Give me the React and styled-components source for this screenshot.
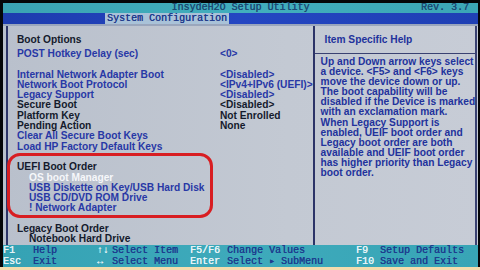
import React from 'react'
import styled, { createGlobalStyle } from 'styled-components'

const GlobalStyle = createGlobalStyle`
  html, body {
    margin: 0;
    padding: 0;
    background: #000;
  }
`

const Screen = styled.div`
  width: 480px;
  height: 270px;
  box-sizing: border-box;
  padding: 3px 2px 0 3px;
  background: #050608;
  display: flex;
  flex-direction: column;
  overflow: hidden;
`
const TitleBar = styled.div`
  height: 10px;
  background: linear-gradient(90deg, #3aa3b3, #42aebd 50%, #3ba7b6);
  font-family: "Liberation Mono", monospace;
  font-size: 10px;
  line-height: 10px;
  color: #1c4a74;
  position: relative;
  display: flex;
  justify-content: center;
  text-shadow: 0.3px 0 0 #1c4a74;
`
const Rev = styled.span`
  position: absolute;
  right: 9px;
  top: 0;
`
const MenuBar = styled.div`
  height: 11px;
  background: linear-gradient(90deg, #1d3cae, #2446c2 50%, #1f40b4);
  padding-left: 102px;
  display: flex;
  border-bottom: 2px solid #9aa6bc;
`
const Tab = styled.div`
  background: #a9c2d8;
  color: #1e3a8c;
  font-family: "Liberation Mono", monospace;
  font-size: 10px;
  line-height: 11px;
  padding: 0 2px;
  text-shadow: 0.3px 0 0 #1e3a8c;
`
const Body = styled.div`
  flex: 1;
  display: flex;
  background: linear-gradient(90deg, #b9c0cc, #c3c9d3 60%, #c7ccd6);
  padding-left: 3px;
  padding-right: 2px;
  min-height: 0;
`
const LeftPanel = styled.div`
  position: relative;
  width: 314px;
  border-left: 2px solid #2c3468;
  padding: 9px 0 0 9px;
  font-family: "Liberation Sans", Arial, sans-serif;
  font-weight: bold;
  font-size: 10.2px;
`
const Row = styled.div`
  display: flex;
  height: 10.3px;
  line-height: 10.3px;
  white-space: nowrap;
  color: ${p => p.$tone === 'dark' ? '#141a2c' : p.$tone === 'white' ? '#f6f7fa' : '#2838a6'};
  padding-left: ${p => p.$indent ? '12px' : '0'};
  margin-bottom: ${p => p.$gap ? '3.7px' : '0'};
`
const Label = styled.span`
  width: 203px;
`
const Value = styled.span``
const Spacer = styled.div`
  height: 10.3px;
`
const Highlight = styled.div`
  position: absolute;
  left: -1px;
  top: 127px;
  width: 206px;
  height: 65px;
  border: 3px solid #d81e22;
  border-radius: 13px;
  box-sizing: border-box;
`
const HelpPanel = styled.div`
  flex: 1;
  border-left: 2px solid #2c3468;
  border-right: 2px solid #3a4272;
  font-family: "Liberation Sans", Arial, sans-serif;
  font-weight: bold;
  font-size: 10.2px;
  color: #22329c;
`
const HelpTitle = styled.div`
  height: 27px;
  line-height: 27px;
  padding-left: 10px;
  border-bottom: 1.5px solid #3a4272;
`
const HelpText = styled.div`
  padding: 3px 0 0 6px;
  line-height: 10.1px;
  white-space: nowrap;
`
const Footer = styled.div`
  height: 22px;
  background: linear-gradient(90deg, #35a2b4, #3eaabb 50%, #38a5b6);
  display: grid;
  grid-template-columns: 30px 64px 15px 78px 37px 129px 24px 1fr;
  grid-auto-rows: 11px;
  font-family: "Liberation Mono", monospace;
  font-size: 10px;
  line-height: 11px;
  white-space: pre;
`
const Key = styled.span`
  color: #e6f4f7;
  text-shadow: 0.3px 0 0 #e6f4f7;
`
const Desc = styled.span`
  color: #1d3c8e;
  text-shadow: 0.3px 0 0 #1d3c8e;
`
const BottomEdge = styled.div`
  height: 3px;
  margin: 0 -2px 0 -3px;
  background: #f3dcae;
`

const options = [
  { label: 'Internal Network Adapter Boot', value: '<Disabled>' },
  { label: 'Network Boot Protocol', value: '<IPv4+IPv6 (UEFI)>' },
  { label: 'Legacy Support', value: '<Disabled>' },
  { label: 'Secure Boot', value: '<Disabled>', tone: 'dark' },
  { label: 'Platform Key', value: 'Not Enrolled', tone: 'dark' },
  { label: 'Pending Action', value: 'None', tone: 'dark' },
  { label: 'Clear All Secure Boot Keys' },
  { label: 'Load HP Factory Default Keys' },
]

const uefi = [
  { label: 'OS boot Manager', tone: 'white' },
  { label: 'USB Diskette on Key/USB Hard Disk' },
  { label: 'USB CD/DVD ROM Drive' },
  { label: '! Network Adapter' },
]

const help = [
  'Up and Down arrow keys select',
  'a device. <F5> and <F6> keys',
  'move the device down or up.',
  'The boot capability will be',
  'disabled if the Device is marked',
  'with an exclamation mark.',
  'When Legacy Support is',
  'enabled, UEIF boot order and',
  'Legacy boot order are both',
  'available and UEIF boot order',
  'has higher priority than Legacy',
  'boot order.',
]

const keys = [
  ['F1', 'Help', '\u2191\u2193', 'Select Item', 'F5/F6', 'Change Values', 'F9', 'Setup Defaults'],
  ['Esc', 'Exit', '\u2194', 'Select Menu', 'Enter', 'Select \u25B8 SubMenu', 'F10', 'Save and Exit'],
]

const App = () => {
  return (
    <Screen>
      <GlobalStyle />
      <TitleBar>
        InsydeH2O Setup Utility
        <Rev>Rev. 3.7</Rev>
      </TitleBar>
      <MenuBar>
        <Tab>System Configuration</Tab>
      </MenuBar>
      <Body>
        <LeftPanel>
          <Row $tone="dark" $gap>Boot Options</Row>
          <Row>
            <Label>POST Hotkey Delay (sec)</Label>
            <Value>&lt;0&gt;</Value>
          </Row>
          <Spacer />
          {options.map(o => (
            <Row key={o.label} $tone={o.tone}>
              <Label>{o.label}</Label>
              {o.value && <Value>{o.value}</Value>}
            </Row>
          ))}
          <Spacer />
          <Row $tone="dark">UEFI Boot Order</Row>
          {uefi.map(u => (
            <Row key={u.label} $tone={u.tone} $indent>{u.label}</Row>
          ))}
          <Spacer />
          <Row $tone="dark">Legacy Boot Order</Row>
          <Row $tone="dark" $indent>Notebook Hard Drive</Row>
          <Highlight />
        </LeftPanel>
        <HelpPanel>
          <HelpTitle>Item Specific Help</HelpTitle>
          <HelpText>
            {help.map(line => <div key={line}>{line}</div>)}
          </HelpText>
        </HelpPanel>
      </Body>
      <Footer>
        {keys.map((row, i) => row.map((cell, j) => (
          j % 2 === 0
            ? <Key key={`${i}-${j}`}>{cell}</Key>
            : <Desc key={`${i}-${j}`}>{cell}</Desc>
        )))}
      </Footer>
      <BottomEdge />
    </Screen>
  )
}

export default App
